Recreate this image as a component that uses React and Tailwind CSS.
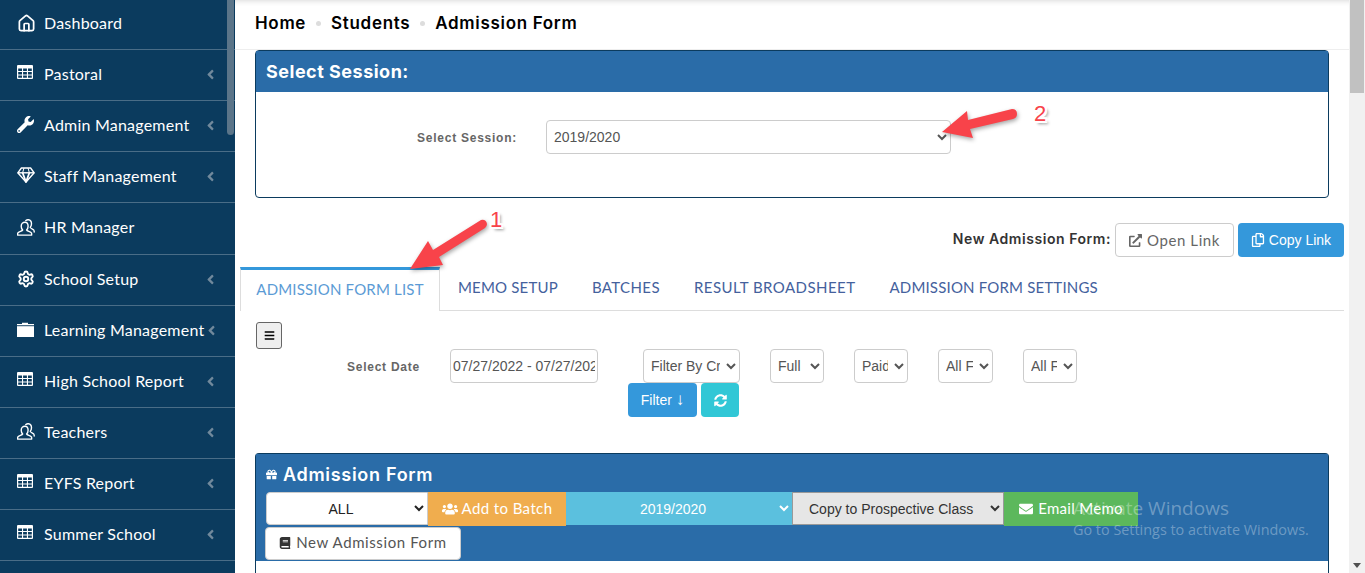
import React from "react";
import {
  FaAngleLeft,
  FaBars,
  FaBook,
  FaEnvelope,
  FaExternalLinkAlt,
  FaGift,
  FaRegCopy,
  FaSyncAlt,
  FaUsers,
  FaWrench,
} from "react-icons/fa";
import { House, Settings } from "lucide-react";

function CaseIcon() {
  return (
    <svg width="17" height="15" viewBox="0 0 17 15" fill="white">
      <path d="M5 2V.8h6V2h6v1.2H0V2z" />
      <path d="M0 4.2h17V15H0z" />
    </svg>
  );
}

function GridIcon() {
  return (
    <svg width="16" height="14" viewBox="0 0 16 14" className="mt-[-3px]">
      <rect width="16" height="14" rx="1" fill="white" />
      <path d="M1.2 3.6h3.8v2.4H1.2zM6.1 3.6h3.8v2.4H6.1zM11 3.6h3.8v2.4H11zM1.2 7.1h3.8v2.4H1.2zM6.1 7.1h3.8v2.4H6.1zM11 7.1h3.8v2.4H11zM1.2 10.6h3.8v2.2H1.2zM6.1 10.6h3.8v2.2H6.1zM11 10.6h3.8v2.2H11z" fill="#0b3b5e" />
    </svg>
  );
}

function GemIcon() {
  return (
    <svg width="18" height="16" viewBox="0 0 18 16" fill="none" stroke="white" strokeWidth="1.4" strokeLinejoin="round" className="mt-[-2px]">
      <path d="M4.4 1h9.2l3.6 4.8L9 15 .8 5.8z" />
      <path d="M.8 5.8h16.4" />
      <path d="M5.6 5.8 9 15l3.4-9.2" strokeWidth="1.8" />
      <path d="M5.6 5.8 7 1M12.4 5.8 11 1" strokeWidth="1" />
    </svg>
  );
}

function PeopleIcon() {
  return (
    <svg width="18" height="17" viewBox="0 0 18 17" fill="none" stroke="white" strokeWidth="1.4" strokeLinejoin="round" strokeLinecap="round">
      <path d="M8 3.2C6 3.2 4.2 4.8 4.2 7.2c0 1.600.6 2.900 1.500 3.800-.4 1.200-4.300 1.500-4.900 3-.3.8-.1 2.100-.1 2.100H14.600s.2-1.300-.1-2.100c-.6-1.500-4.500-1.800-4.900-3 .9-.9 1.500-2.200 1.500-3.800 0-2.400-1.300-4-3.100-4z" />
      <path d="M8.800 1.500C9.600.9 10.500.7 11.400.8c2 .3 3.100 2 3.100 4 0 1.500-.5 2.700-1.300 3.600.4 1.200 3.400 1.600 3.800 3 .2.600.2 1.600.2 1.600" />
    </svg>
  );
}

const menu = [
  { label: "Dashboard", icon: <House size={19} strokeWidth={2.2} />, row: "h-[50px] pb-[3px]" },
  { label: "Pastoral", icon: <GridIcon />, more: true },
  { label: "Admin Management", icon: <FaWrench size={17} />, more: true },
  { label: "Staff Management", icon: <GemIcon />, more: true },
  { label: "HR Manager", icon: <PeopleIcon />, row: "h-[52px] pb-[3px]" },
  { label: "School Setup", icon: <Settings size={18} strokeWidth={2.5} />, more: true },
  { label: "Learning Management", icon: <CaseIcon />, more: true },
  { label: "High School Report", icon: <GridIcon />, more: true },
  { label: "Teachers", icon: <PeopleIcon />, more: true },
  { label: "EYFS Report", icon: <GridIcon />, more: true },
  { label: "Summer School", icon: <GridIcon />, more: true },
];

function Sidebar() {
  return (
    <aside className="relative w-[235px] shrink-0 overflow-hidden bg-[#0b3b5e] font-['Lato',sans-serif] text-[16px] text-white">
      {menu.map((item) => (
        <div
          key={item.label}
          className={`flex items-center border-b border-[#4a6d87] pl-[17px] pr-[17px] ${item.row || "h-[51px] pb-[3px]"}`}
        >
          <span className="flex w-[27px] shrink-0 items-center">{item.icon}</span>
          <span className="whitespace-nowrap tracking-[0.22px]">{item.label}</span>
          {item.more && <FaAngleLeft size={15} className="ml-auto mt-[2px] shrink-0 text-[#71899c]" />}
        </div>
      ))}
      <div className="absolute right-[1px] top-0 h-[135px] w-[7px] rounded-b bg-[#5b7589]" />
    </aside>
  );
}

function Sel({ className, children }) {
  return (
    <select
      className={`h-[34px] rounded border border-[#ccc] bg-white px-[3px] text-sm text-[#555] ${className}`}
    >
      <option>{children}</option>
    </select>
  );
}

function Main() {
  return (
    <main className="min-w-0 flex-1 font-['Liberation_Sans',sans-serif]">
      <div className="flex h-[50px] items-center border-b border-[#eee] pb-[2px] pl-5 font-['Inter',sans-serif] text-[17px] font-semibold tracking-[0.68px] text-black shadow-[inset_0_6px_6px_-6px_rgba(0,0,0,0.2)]">
        <span>Home</span>
        <span className="mx-[10px] h-[5px] w-[5px] rounded-full bg-[#ddd]" />
        <span>Students</span>
        <span className="mx-[10px] h-[5px] w-[5px] rounded-full bg-[#ddd]" />
        <span>Admission Form</span>
      </div>

      <section className="mx-5 h-[148px] rounded border border-[#0b3b5e] bg-white">
        <div className="flex h-[41px] items-center bg-[#2a6ca8] pl-[10px] font-['Inter',sans-serif] text-[18px] font-bold tracking-[0.5px] text-white">
          Select Session:
        </div>
        <div className="flex items-center pt-[28px]">
          <label className="mt-[1px] w-[261px] text-right text-xs font-bold tracking-[0.75px] text-[#666]">
            Select Session:
          </label>
          <select className="ml-[29px] h-[34px] w-[405px] rounded border border-[#ccc] bg-white px-[3px] text-sm text-[#555]">
            <option>2019/2020</option>
          </select>
        </div>
      </section>

      <div className="mr-[5px] mt-[25px] flex items-center justify-end">
        <span className="mb-[3px] mr-1 font-['Inter',sans-serif] text-sm font-semibold tracking-[0.55px] text-[#333]">
          New Admission Form:
        </span>
        <button className="flex h-[34px] w-[119px] items-center justify-center gap-[5px] rounded border border-[#ccc] bg-white font-['Lato',sans-serif] text-[15px] tracking-[0.6px] text-[#666]">
          <FaExternalLinkAlt size={13} /> Open Link
        </button>
        <button className="ml-1 flex h-[34px] w-[106px] items-center justify-center gap-[4px] rounded bg-[#3498db] text-sm font-medium text-white">
          <FaRegCopy size={14} /> Copy Link
        </button>
      </div>

      <div className="mx-[5px] mt-[10px] flex h-[44px] items-end border-b border-[#ddd] font-['Lato',sans-serif] text-[15px] tracking-[0.18px] text-[#44619d]">
        <div className="mb-[-1px] flex h-[44px] w-[200px] items-center justify-center border-x border-t-[3px] border-x-[#ddd] border-t-[#3498db] bg-white pb-[2px] text-[#5b9bd5]">
          ADMISSION FORM LIST
        </div>
        <div className="flex h-[44px] items-center gap-[34px] pb-[1px] pl-[18px]">
          <span>MEMO SETUP</span>
          <span className="tracking-[0.4px]">BATCHES</span>
          <span className="tracking-[0.45px]">RESULT BROADSHEET</span>
          <span className="tracking-[0.18px]">ADMISSION FORM SETTINGS</span>
        </div>
      </div>

      <button className="ml-[21px] mt-[11px] flex h-[27px] w-[26px] items-center justify-center rounded-[3px] border border-[#666] bg-[#efefef] text-black">
        <FaBars size={11} />
      </button>

      <div className="flex items-center">
        <label className="ml-[112px] mt-[1px] w-[73px] whitespace-nowrap text-xs font-bold tracking-[0.75px] text-[#666]">
          Select Date
        </label>
        <input
          readOnly
          value="07/27/2022 - 07/27/2022"
          className="ml-[30px] h-[34px] w-[148px] rounded border border-[#ccc] bg-white px-[2px] text-sm text-[#555]"
        />
        <Sel className="ml-[45px] w-[97px]">Filter By Criteria</Sel>
        <Sel className="ml-[30px] w-[54px]">Full Payment</Sel>
        <Sel className="ml-[30px] w-[54px]">Paid</Sel>
        <Sel className="ml-[30px] w-[55px]">All Forms</Sel>
        <Sel className="ml-[30px] w-[54px]">All Forms</Sel>
      </div>

      <div className="ml-[393px] flex gap-1">
        <button className="h-[34px] w-[69px] rounded bg-[#3498db] text-sm text-white">
          Filter <span className="text-[17px] leading-none">↓</span>
        </button>
        <button className="flex h-[34px] w-[38px] items-center justify-center rounded bg-[#31c7d6] text-white">
          <FaSyncAlt size={13} />
        </button>
      </div>

      <section className="mx-5 mt-[36px] rounded-t border-x border-t border-[#0b3b5e]">
        <div className="h-[107px] bg-[#2a6ca8] pl-[10px]">
          <h2 className="flex h-[38px] items-center gap-[6px] pt-[2px] font-['Inter',sans-serif] text-[18px] font-semibold tracking-[0.7px] text-white">
            <FaGift size={11} /> Admission Form
          </h2>
          <div className="flex h-[34px]">
            <select className="h-[33px] w-[162px] rounded-l border border-[#ccc] bg-white text-center text-sm text-[#222]">
              <option>ALL</option>
            </select>
            <button className="flex h-[34px] w-[138px] items-center justify-center gap-[4px] bg-[#f0ad4e] pb-[1px] font-['Lato',sans-serif] text-[15px] tracking-[0.4px] text-white">
              <FaUsers size={16} /> Add to Batch
            </button>
            <select className="h-[33px] w-[226px] bg-[#5bc0de] text-center text-sm text-white">
              <option>2019/2020</option>
            </select>
            <select className="h-[33px] w-[212px] border border-[#999] bg-[#e6e6e6] pl-3 text-sm text-[#333]">
              <option>Copy to Prospective Class</option>
            </select>
            <button className="flex h-[34px] w-[134px] items-center justify-center gap-[5px] bg-[#5cb85c] pb-[1px] font-['Lato',sans-serif] text-[15px] tracking-[0.3px] text-white">
              <FaEnvelope size={14} /> Email Memo
            </button>
          </div>
          <button className="-ml-[1px] mt-[1px] flex h-[33px] w-[196px] items-center justify-center gap-[5px] rounded border border-[#ccc] bg-white pb-[2px] font-['Lato',sans-serif] text-[15px] tracking-[0.6px] text-[#555]">
            <FaBook size={12} className="text-[#333]" /> New Admission Form
          </button>
        </div>
        <div className="h-[20px] bg-white" />
      </section>
    </main>
  );
}

function PageScrollbar() {
  return (
    <div className="flex w-4 shrink-0 flex-col bg-[#f1f1f1]">
      <div className="mx-[1px] h-[93px] bg-[#c1c1c1]" />
      <div className="mt-auto flex h-[16px] items-center justify-center">
        <span className="h-0 w-0 border-x-[4px] border-t-[5px] border-x-transparent border-t-[#505050]" />
      </div>
    </div>
  );
}

function Callouts() {
  const number =
    "absolute font-['Liberation_Sans',sans-serif] text-[22px] text-[#f8434a] [text-shadow:-2px_-2px_0_#fff,2px_-2px_0_#fff,-2px_2px_0_#fff,2px_2px_0_#fff,0_-2px_0_#fff,0_2px_0_#fff,-2px_0_0_#fff,2px_0_0_#fff,3px_3px_3px_#888]";
  return (
    <>
      <svg
        className="pointer-events-none absolute inset-0 drop-shadow-[1px_2px_2px_rgba(0,0,0,0.35)]"
        width="1365"
        height="573"
        fill="#f8434a"
      >
        <path d="M410 269L428 241L433 250L481 220Q486 219 487 224Q487 226 485 228L439 257L443 265Z" />
        <path d="M942 132L967 111L968 120L1012 109Q1017 109 1017 114Q1017 118 1013 119L970 129L973 138Z" />
      </svg>
      <span className={`${number} left-[490px] top-[203px]`}>1</span>
      <span className={`${number} left-[1034px] top-[97px]`}>2</span>
      <div className="pointer-events-none absolute left-[1073px] top-[495px] font-['Open_Sans',sans-serif] text-[rgba(255,255,255,0.33)]">
        <div className="text-[19px] leading-[26px]">Activate Windows</div>
        <div className="mt-[-1px] text-[14.4px] leading-[19px]">Go to Settings to activate Windows.</div>
      </div>
    </>
  );
}

export default function App() {
  return (
    <div className="relative flex h-[573px] w-[1365px] overflow-hidden bg-white">
      <Sidebar />
      <Main />
      <PageScrollbar />
      <Callouts />
    </div>
  );
}
